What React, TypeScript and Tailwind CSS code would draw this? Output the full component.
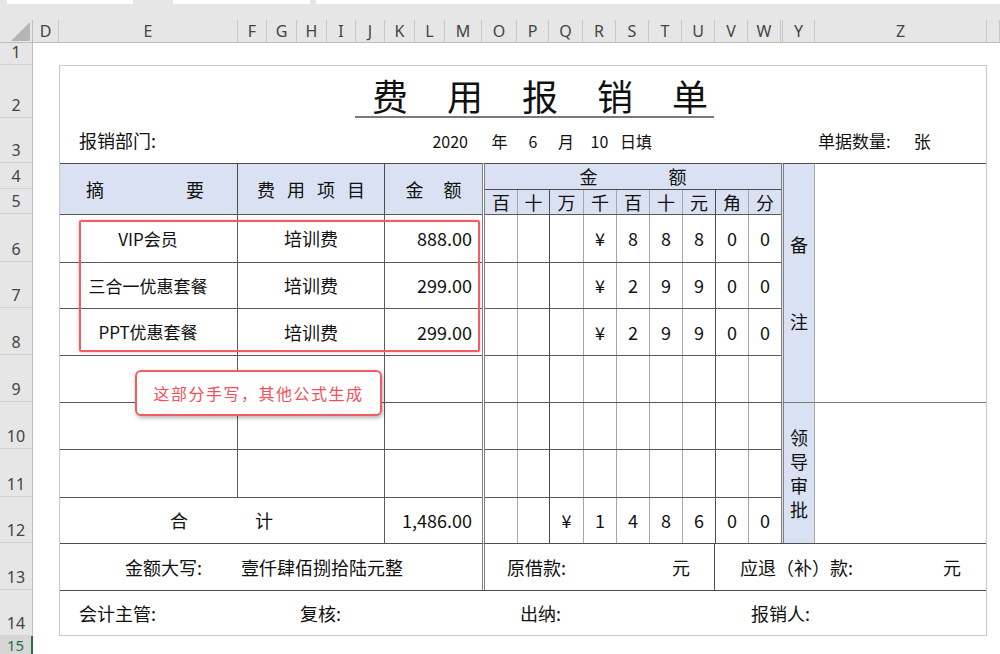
import React from 'react'

// Excel-style expense reimbursement sheet (费用报销单)

const colHeaders = [
  { label: 'D', cls: 'col-[2/3]' },
  { label: 'E', cls: 'col-[3/4]' },
  { label: 'F', cls: 'col-[4/5]' },
  { label: 'G', cls: 'col-[5/6]' },
  { label: 'H', cls: 'col-[6/7]' },
  { label: 'I', cls: 'col-[7/8]' },
  { label: 'J', cls: 'col-[8/9]' },
  { label: 'K', cls: 'col-[9/10]' },
  { label: 'L', cls: 'col-[10/11]' },
  { label: 'M', cls: 'col-[11/12]' },
  { label: 'O', cls: 'col-[12/13]' },
  { label: 'P', cls: 'col-[13/14]' },
  { label: 'Q', cls: 'col-[14/15]' },
  { label: 'R', cls: 'col-[15/16]' },
  { label: 'S', cls: 'col-[16/17]' },
  { label: 'T', cls: 'col-[17/18]' },
  { label: 'U', cls: 'col-[18/19]' },
  { label: 'V', cls: 'col-[19/20]' },
  { label: 'W', cls: 'col-[20/21]' },
  { label: '', cls: 'col-[21/22]' },
  { label: 'Y', cls: 'col-[22/23]' },
  { label: 'Z', cls: 'col-[23/24]' },
  { label: '', cls: 'col-[24/25]' },
]

const rowHeaders = [
  'row-[2/3]', 'row-[3/4]', 'row-[4/5]', 'row-[5/6]', 'row-[6/7]',
  'row-[7/8]', 'row-[8/9]', 'row-[9/10]', 'row-[10/11]', 'row-[11/12]',
  'row-[12/13]', 'row-[13/14]', 'row-[14/15]', 'row-[15/16]', 'row-[16/17]',
]

const items = [
  { r: 'row-[7/8]', a: 'VIP会员', b: '培训费', c: '888.00' },
  { r: 'row-[8/9]', a: '三合一优惠套餐', b: '培训费', c: '299.00' },
  { r: 'row-[9/10]', a: 'PPT优惠套餐', b: '培训费', c: '299.00' },
  { r: 'row-[10/11]', a: '', b: '', c: '' },
  { r: 'row-[11/12]', a: '', b: '', c: '' },
  { r: 'row-[12/13]', a: '', b: '', c: '' },
]

const digitW = ['w-[32px]', 'w-[32px]', 'w-[34px]', 'w-[33px]', 'w-[33px]', 'w-[33px]', 'w-[33px]', 'w-[33px]', 'w-[33px]']
const units = ['百', '十', '万', '千', '百', '十', '元', '角', '分']
const digitRows = [
  { h: 'h-[48px]', d: ['', '', '', '¥', '8', '8', '8', '0', '0'] },
  { h: 'h-[46px]', d: ['', '', '', '¥', '2', '9', '9', '0', '0'] },
  { h: 'h-[47px]', d: ['', '', '', '¥', '2', '9', '9', '0', '0'] },
  { h: 'h-[47px]', d: ['', '', '', '', '', '', '', '', ''] },
  { h: 'h-[47px]', d: ['', '', '', '', '', '', '', '', ''] },
  { h: 'h-[48px]', d: ['', '', '', '', '', '', '', '', ''] },
  { h: 'h-[46px]', d: ['', '', '¥', '1', '4', '8', '6', '0', '0'] },
]

function vline(i: number) {
  if (i === 0) return ''
  if (i === 2 || i === 7) return 'border-l border-[#4d4d4d]'
  return 'border-l border-[#a6a6a6]'
}

function DigitArea() {
  return (
    <div className="col-[12/21] row-[5/14] flex flex-col border-l-[3px] border-double border-l-[#808080] border-t border-t-[#4d4d4d]">
      <div className="h-[25px] bg-[#d9e1f2] flex items-center justify-center gap-[71px] text-[18px]">
        <span>金</span>
        <span>额</span>
      </div>
      <div className="h-[25px] flex bg-[#d9e1f2] border-t border-[#4d4d4d] text-[18px]">
        {units.map((u, i) => (
          <div key={i} className={`${digitW[i]} ${vline(i)} flex items-center justify-center`}>{u}</div>
        ))}
      </div>
      {digitRows.map((row, ri) => (
        <div key={ri} className={`${row.h} flex border-t border-[#5a5a5a] text-[18px]`}>
          {row.d.map((d, i) => (
            <div key={i} className={`${digitW[i]} ${vline(i)} flex items-center justify-center`}>{d}</div>
          ))}
        </div>
      ))}
    </div>
  )
}

export default function App() {
  return (
    <div className="w-[1000px] h-[654px] overflow-hidden bg-white text-[#111] font-['Noto_Sans_CJK_SC',sans-serif]">
      {/* top strip */}
      <div className="h-[20px] bg-[#e6e6e6] flex items-start">
        <div className="ml-[7px] w-[126px] h-[4px] bg-white" />
        <div className="ml-[40px] w-[137px] h-[4px] bg-white" />
        <div className="ml-[6px] flex-1 h-[4px] bg-white" />
      </div>

      <div className="grid grid-cols-[33px_26px_179px_29px_30px_30px_29px_29px_30px_30px_37px_35px_32px_34px_33px_33px_33px_33px_33px_33px_2px_32px_172px_13px] grid-rows-[23px_22px_53px_45px_26px_25px_48px_46px_47px_47px_47px_48px_46px_47px_46px_18px]">
        {/* corner */}
        <div className="col-[1/2] row-[1/2] bg-[#e6e6e6] border-r border-b border-[#bdbdbd]">
          <svg width="32" height="22" viewBox="0 0 32 22">
            <polygon points="30,2 30,21 11,21" fill="#b5b5b5" />
          </svg>
        </div>

        {/* column headers */}
        {colHeaders.map((c) => (
          <div
            key={c.cls}
            className={`${c.cls} row-[1/2] bg-[#e6e6e6] border-r border-b border-r-[#c8c8c8] border-b-[#bdbdbd] flex items-center justify-center text-[16px] text-[#444] font-['Noto_Sans',sans-serif]`}
          >
            {c.label}
          </div>
        ))}

        {/* row headers */}
        {rowHeaders.map((r, i) =>
          i === 14 ? (
            <div key={r} className={`col-[1/2] ${r} bg-[#d6d6d6] border-r-2 border-[#217346] flex items-start justify-center overflow-hidden text-[15px] leading-[18px] text-[#217346] font-['Noto_Sans',sans-serif]`}>
              {i + 1}
            </div>
          ) : (
            <div key={r} className={`col-[1/2] ${r} bg-[#e6e6e6] border-r border-b border-r-[#bdbdbd] border-b-[#d2d2d2] flex items-end justify-center pb-[3px] text-[16px] leading-[18px] text-[#444] font-['Noto_Sans',sans-serif]`}>
              {i + 1}
            </div>
          )
        )}

        {/* title */}
        <div className="col-[3/24] row-[3/4] flex items-end pl-[296px]">
          <div className="w-[359px] h-[43px] border-b-2 border-[#7a7a7a] pl-[17px] whitespace-nowrap text-[36px] leading-[40px] tracking-[39px]">
            费用报销单
          </div>
        </div>

        {/* row 3 */}
        <div className="col-[3/9] row-[4/5] flex items-center pl-[20px] text-[18px]">报销部门:</div>
        <div className="col-[9/12] row-[4/5] flex items-center justify-end pr-[14px] text-[16px]">2020</div>
        <div className="col-[12/13] row-[4/5] flex items-center justify-center text-[16px]">年</div>
        <div className="col-[13/14] row-[4/5] flex items-center justify-center text-[16px]">6</div>
        <div className="col-[14/15] row-[4/5] flex items-center justify-center text-[16px]">月</div>
        <div className="col-[15/16] row-[4/5] flex items-center justify-center text-[16px]">10</div>
        <div className="col-[16/18] row-[4/5] flex items-center pl-[4px] text-[16px]">日填</div>
        <div className="col-[23/24] row-[4/5] flex items-center pl-[3px] text-[17px]">
          <span>单据数量:</span>
          <span className="ml-[23px]">张</span>
        </div>

        {/* header rows 4-5 */}
        <div className="col-[3/4] row-[5/7] bg-[#d9e1f2] border-t border-r border-[#4d4d4d] flex items-center justify-between pl-[27px] pr-[33px] text-[18px]">
          <span>摘</span>
          <span>要</span>
        </div>
        <div className="col-[4/9] row-[5/7] bg-[#d9e1f2] border-t border-r border-[#4d4d4d] flex items-center justify-center gap-[12px] text-[18px]">
          <span>费</span>
          <span>用</span>
          <span>项</span>
          <span>目</span>
        </div>
        <div className="col-[9/12] row-[5/7] bg-[#d9e1f2] border-t border-[#4d4d4d] flex items-center justify-center gap-[20px] text-[18px]">
          <span>金</span>
          <span>额</span>
        </div>

        <DigitArea />

        {/* remarks / approval */}
        <div className="col-[21/23] row-[5/11] bg-[#d9e1f2] border-l-[3px] border-double border-l-[#808080] border-t border-t-[#4d4d4d] border-r border-r-[#a6a6a6] flex flex-col items-center justify-center gap-[50px] text-[18px]">
          <span>备</span>
          <span>注</span>
        </div>
        <div className="col-[23/24] row-[5/11] border-t border-[#4d4d4d]" />
        <div className="col-[21/23] row-[11/14] bg-[#d9e1f2] border-l-[3px] border-double border-l-[#808080] border-t border-t-[#7a7a7a] border-r border-r-[#a6a6a6] flex flex-col items-center justify-center text-[18px] leading-[24px]">
          <span>领</span>
          <span>导</span>
          <span>审</span>
          <span>批</span>
        </div>
        <div className="col-[23/24] row-[11/14] border-t border-[#7a7a7a]" />

        {/* item rows */}
        {items.map((it) => (
          <React.Fragment key={it.r}>
            <div className={`col-[3/4] ${it.r} border-t border-r border-[#5a5a5a] flex items-center justify-center text-[17px]`}>{it.a}</div>
            <div className={`col-[4/9] ${it.r} border-t border-r border-[#5a5a5a] flex items-center justify-center text-[18px]`}>{it.b}</div>
            <div className={`col-[9/12] ${it.r} border-t border-[#5a5a5a] flex items-center justify-end pr-[10px] text-[18px]`}>{it.c}</div>
          </React.Fragment>
        ))}

        {/* total row */}
        <div className="col-[3/9] row-[13/14] border-t border-r border-[#5a5a5a] flex items-center justify-center gap-[67px] text-[18px]">
          <span>合</span>
          <span>计</span>
        </div>
        <div className="col-[9/12] row-[13/14] border-t border-[#5a5a5a] flex items-center justify-end pr-[10px] text-[18px]">1,486.00</div>

        {/* row 13 */}
        <div className="col-[3/12] row-[14/15] border-t border-[#4d4d4d] flex items-center pl-[66px] text-[18px]">
          <span>金额大写:</span>
          <span className="ml-[39px]">壹仟肆佰捌拾陆元整</span>
        </div>
        <div className="col-[12/19] row-[14/15] border-l-[3px] border-double border-l-[#808080] border-t border-t-[#4d4d4d] border-r border-r-[#4d4d4d] flex items-center justify-between pl-[22px] pr-[24px] text-[18px]">
          <span>原借款:</span>
          <span>元</span>
        </div>
        <div className="col-[19/24] row-[14/15] border-t border-[#4d4d4d] flex items-center justify-between pl-[25px] pr-[26px] text-[18px]">
          <span>应退（补）款:</span>
          <span>元</span>
        </div>

        {/* row 14 signatures */}
        <div className="col-[3/24] row-[15/16] border-t border-[#4d4d4d] flex items-center pl-[20px] text-[18px]">
          <span className="w-[221px]">会计主管:</span>
          <span className="w-[220px]">复核:</span>
          <span className="w-[231px]">出纳:</span>
          <span>报销人:</span>
        </div>

        {/* outer frame */}
        <div className="col-[3/24] row-[3/16] border border-[#c9c9c9] pointer-events-none" />

        {/* highlight box over handwritten part */}
        <div className="col-[3/12] row-[7/10] ml-[20px] mr-[2px] mt-[6px] mb-[3px] border-2 border-[#f25c63] rounded-[2px] shadow-[0_0_3px_rgba(240,80,90,0.45)] pointer-events-none" />

        {/* callout */}
        <div className="col-[3/9] row-[10/12] ml-[76px] mr-[3px] mt-[15px] mb-[33px] bg-white border-2 border-[#f25c63] rounded-[6px] shadow-[1px_2px_4px_rgba(0,0,0,0.3)] flex items-center justify-center text-[16px] tracking-[1.5px] text-[#f0505a]">
          这部分手写，其他公式生成
        </div>
      </div>
    </div>
  )
}
